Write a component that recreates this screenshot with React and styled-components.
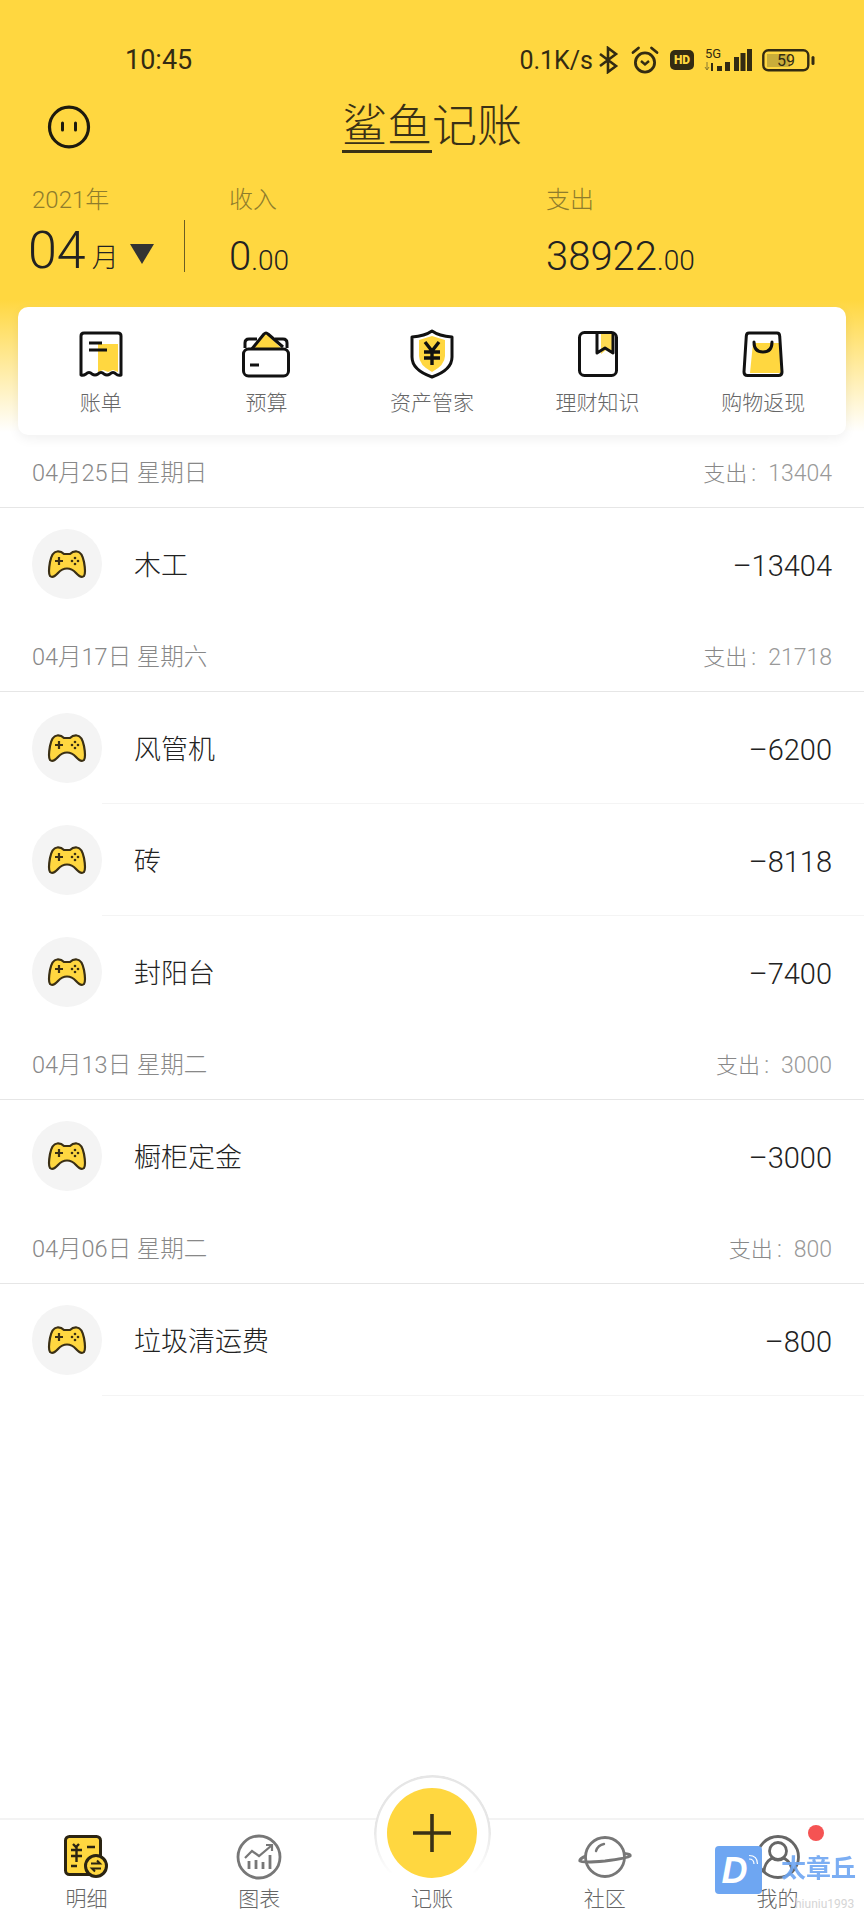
import styled, { createGlobalStyle } from 'styled-components';

const YELLOW = '#ffd740';
const INK = '#332b12';

const Global = createGlobalStyle`
    html, body {
        margin: 0;
        padding: 0;
        background: #fff;
    }
    * {
        box-sizing: border-box;
    }
`;

const groups = [
    { date: '04月25日 星期日', total: '13404', rows: [{ name: '木工', amount: '13404' }] },
    {
        date: '04月17日 星期六',
        total: '21718',
        rows: [
            { name: '风管机', amount: '6200' },
            { name: '砖', amount: '8118' },
            { name: '封阳台', amount: '7400' },
        ],
    },
    { date: '04月13日 星期二', total: '3000', rows: [{ name: '橱柜定金', amount: '3000' }] },
    { date: '04月06日 星期二', total: '800', rows: [{ name: '垃圾清运费', amount: '800' }] },
];

function Bluetooth() {
    return (
        <svg width="22" height="28" viewBox="0 0 22 28" fill="none" stroke={INK} strokeWidth="2.6">
            <path d="M2 8 L18 20 L10 26 V2 L18 8 L2 20" />
        </svg>
    );
}

function Alarm() {
    return (
        <svg width="30" height="28" viewBox="0 0 30 28" fill="none" stroke={INK} strokeWidth="2.8">
            <circle cx="15" cy="16.5" r="9.6" />
            <path d="M3 6.5 L8.5 2 M27 6.5 L21.5 2" strokeLinecap="round" />
            <path d="M11 15 L15 18.5 L19 15" strokeWidth="2.4" />
        </svg>
    );
}

function Signal() {
    return (
        <svg width="48" height="26" viewBox="0 0 48 26" fill={INK}>
            <text x="1" y="11" fontSize="13" fontFamily="Roboto, sans-serif">5G</text>
            <path d="M3 15v8M1 20l2 3 2-3" stroke="#8a7a30" strokeWidth="1" fill="none" />
            <path d="M7 16h2v8H7z" />
            <rect x="13" y="19" width="5" height="5" />
            <rect x="21" y="15" width="5" height="9" />
            <rect x="30" y="10" width="5" height="14" />
            <rect x="43" y="2" width="5" height="22" />
            <rect x="36.500" y="6" width="5" height="18" />
        </svg>
    );
}

function Battery() {
    return (
        <svg width="53" height="23" viewBox="0 0 53 23">
            <rect x="1.3" y="1.3" width="45" height="20" rx="5" fill="none" stroke={INK} strokeWidth="2.4" />
            <rect x="5" y="5" width="23" height="13" fill="#c9ad3a" />
            <rect x="49.5" y="7" width="3" height="9" rx="1.5" fill={INK} />
            <text x="24" y="17" textAnchor="middle" fontSize="16" fontFamily="Roboto, sans-serif" fill={INK}>
                59
            </text>
        </svg>
    );
}

function Face() {
    return (
        <svg width="44" height="44" viewBox="0 0 44 44" fill="none">
            <ellipse cx="22" cy="22" rx="19.5" ry="19.8" stroke="#1d1a0e" strokeWidth="3.2" />
            <path d="M15.500 18v7M28.500 18v7" stroke="#1d1a0e" strokeWidth="3" strokeLinecap="round" />
        </svg>
    );
}

function ReceiptIcon() {
    return (
        <svg width="48" height="48" viewBox="0 0 48 48" fill="none">
            <path d="M21 14 H41 V42 L36 40 L31 42 L26 40 L21 42 Z" fill={YELLOW} />
            <path
                d="M4 45 V6 Q4 3 7 3 H41 Q44 3 44 6 V45 Q41 46 39 44 Q36 41 33 44 Q30 46 27 44 Q24 41 21 44 Q18 46 15 44 Q12 41 9 44 Q6 46 4 45 Z"
                stroke="#111"
                strokeWidth="3"
                strokeLinejoin="round"
            />
            <path d="M12 13 H25 M12 20 H30" stroke="#111" strokeWidth="3" />
        </svg>
    );
}

function WalletIcon() {
    return (
        <svg width="50" height="48" viewBox="0 0 50 48" fill="none">
            <path d="M11 19 L25 3 L41 19 Z" fill={YELLOW} />
            <path d="M10 20 L23 4 Q25 2 27 4 L42 17" stroke="#111" strokeWidth="3" strokeLinejoin="round" />
            <path d="M4 18 V13 Q4 9 8 9 H16 M34 9 H42 Q46 9 46 13 V18" stroke="#111" strokeWidth="3" />
            <rect x="2.5" y="19" width="45" height="27" rx="5" fill="#fff" stroke="#111" strokeWidth="3" />
            <path d="M9 35 H18" stroke="#111" strokeWidth="3" />
        </svg>
    );
}

function ShieldIcon() {
    return (
        <svg width="46" height="50" viewBox="0 0 46 50" fill="none">
            <path d="M10 11 L23 7 L36 11 V27 Q36 36 23 43 Q10 36 10 27 Z" fill={YELLOW} />
            <path
                d="M23 2 Q30 7 43 8 V28 Q43 41 23 48 Q3 41 3 28 V8 Q16 7 23 2 Z"
                stroke="#111"
                strokeWidth="3"
                strokeLinejoin="round"
            />
            <path d="M16 13 L23 22 L30 13 M23 22 V36 M15 23 H31 M15 29 H31" stroke="#111" strokeWidth="3.4" />
        </svg>
    );
}

function BookIcon() {
    return (
        <svg width="42" height="48" viewBox="0 0 42 48" fill="none">
            <path d="M24 4 H35 V24 L29 20 L24 24 Z" fill={YELLOW} opacity="0.9" />
            <rect x="2.5" y="2.5" width="37" height="43" rx="5" stroke="#111" strokeWidth="3" />
            <path d="M20 3 V23 L28 18 L36 23 V3" stroke="#111" strokeWidth="3" strokeLinejoin="round" />
        </svg>
    );
}

function BagIcon() {
    return (
        <svg width="42" height="48" viewBox="0 0 42 48" fill="none">
            <path d="M11 13 H37 L39 43 H8 Z" fill={YELLOW} />
            <path
                d="M7 3 H35 Q37.5 3 37.7 6 L40 42 Q40 45.5 36.5 45.5 H5.5 Q2 45.5 2 42 L4.300 6 Q4.500 3 7 3 Z"
                stroke="#111"
                strokeWidth="3"
                strokeLinejoin="round"
            />
            <path d="M12 12 Q12 22 21 22 Q30 22 30 12" stroke="#111" strokeWidth="3" strokeLinecap="round" />
        </svg>
    );
}

function Gamepad() {
    return (
        <svg width="40" height="30" viewBox="0 0 40 30" fill="none">
            <path
                d="M10 2.500 Q14 2 17 5 H23 Q26 2 30 2.500 Q35 3 37 13 Q39 24 37 27 Q34 29.500 29 24 Q25 19.500 20 19.500 Q15 19.500 11 24 Q6 29.500 3 27 Q1 24 3 13 Q5 3 10 2.500 Z"
                fill={YELLOW}
                stroke="#3a2f14"
                strokeWidth="2.200"
                strokeLinejoin="round"
            />
            <path d="M8 12 H16 M12 8 V16" stroke="#3a2f14" strokeWidth="2.200" />
            <g fill="#3a2f14">
                <circle cx="28" cy="9" r="1.300" />
                <circle cx="28" cy="15" r="1.300" />
                <circle cx="25" cy="12" r="1.300" />
                <circle cx="31" cy="12" r="1.300" />
            </g>
        </svg>
    );
}

function DetailIcon() {
    return (
        <svg width="44" height="44" viewBox="0 0 44 44" fill="none">
            <rect x="1.500" y="1.500" width="35" height="38" rx="4" fill={YELLOW} stroke="#2b2412" strokeWidth="3" />
            <path d="M9 9 L12 12 L15 9 M7 15 H18 M7 21 H18 M12.500 12 V27 M23 12 H31 M7 31 H13" stroke="#2b2412" strokeWidth="2.400" />
            <circle cx="32" cy="31" r="10.500" fill={YELLOW} stroke="#2b2412" strokeWidth="3" />
            <path d="M27 28.500 H36 L33 25.500 M37 33.500 H28 L31 36.500" stroke="#2b2412" strokeWidth="2" />
        </svg>
    );
}

function ChartIcon() {
    return (
        <svg width="46" height="46" viewBox="0 0 46 46" fill="none" stroke="#777">
            <circle cx="23" cy="23" r="21" strokeWidth="2.800" />
            <path d="M9 24 L16 17 L23 22 L35 12 M30 11 H36 V17" strokeWidth="2.200" />
            <path d="M13 27 V35 M20 26 V35 M27 28 V35 M34 21 V35" strokeWidth="2.800" />
        </svg>
    );
}

function PlanetIcon() {
    return (
        <svg width="54" height="44" viewBox="0 0 54 44" fill="none" stroke="#777">
            <circle cx="27" cy="22" r="19.500" strokeWidth="2.800" />
            <path d="M8 21 Q1 24 2 26 Q4 28 27 26 Q50 23 52 21 Q53 19 46 18.500" strokeWidth="3" fill="none" />
            <path d="M18 16 Q20 10 26 9" strokeWidth="2.400" strokeLinecap="round" />
        </svg>
    );
}

function UserIcon() {
    return (
        <svg width="46" height="46" viewBox="0 0 46 46" fill="none" stroke="#666" strokeWidth="2.800">
            <circle cx="23" cy="23" r="20.500" />
            <circle cx="23" cy="17" r="8.500" />
            <path d="M17 24 Q9 29 9 38 M29 24 Q37 29 37 38" />
            <path d="M17 24 Q23 28 29 24 " />
        </svg>
    );
}

const tools = [
    { label: '账单', icon: <ReceiptIcon /> },
    { label: '预算', icon: <WalletIcon /> },
    { label: '资产管家', icon: <ShieldIcon /> },
    { label: '理财知识', icon: <BookIcon /> },
    { label: '购物返现', icon: <BagIcon /> },
];

function Group({ group, isLast }) {
    return (
        <>
            <GroupHeader>
                <span>{group.date}</span>
                <GroupTotal>
                    <TotalLabel>支出</TotalLabel>
                    <TotalColon>:</TotalColon>
                    {group.total}
                </GroupTotal>
            </GroupHeader>
            {group.rows.map((row, i) => (
                <Row key={row.name}>
                    <IconCircle>
                        <Gamepad />
                    </IconCircle>
                    <RowBody $line={isLast || i < group.rows.length - 1}>
                        <RowName>{row.name}</RowName>
                        <RowAmount>–{row.amount}</RowAmount>
                    </RowBody>
                </Row>
            ))}
        </>
    );
}

export default function App() {
    return (
        <Page>
            <Global />
            <Top>
                <StatusBar>
                    <Clock>10:45</Clock>
                    <StatusIcons>
                        <Speed>0.1K/s</Speed>
                        <Bluetooth />
                        <Alarm />
                        <HdBadge>HD</HdBadge>
                        <Signal />
                        <Battery />
                    </StatusIcons>
                </StatusBar>
                <TitleRow>
                    <Face />
                    <Title>
                        <TitleLine>鲨鱼</TitleLine>记账
                    </Title>
                </TitleRow>
                <Summary>
                    <SummaryCol>
                        <SummaryLabel>2021年</SummaryLabel>
                        <MonthRow>
                            <MonthNumber>04</MonthNumber>
                            <MonthUnit>月</MonthUnit>
                            <Caret />
                            <MonthDivider />
                        </MonthRow>
                    </SummaryCol>
                    <SummaryCol>
                        <SummaryLabel>收入</SummaryLabel>
                        <Money>
                            0<small>.00</small>
                        </Money>
                    </SummaryCol>
                    <SummaryCol>
                        <SummaryLabel>支出</SummaryLabel>
                        <Money>
                            38922<small>.00</small>
                        </Money>
                    </SummaryCol>
                </Summary>
                <ToolCard>
                    {tools.map((tool) => (
                        <Tool key={tool.label}>
                            <ToolIcon>{tool.icon}</ToolIcon>
                            <span>{tool.label}</span>
                        </Tool>
                    ))}
                </ToolCard>
            </Top>
            <List>
                {groups.map((group, i) => (
                    <Group key={group.date} group={group} isLast={i === groups.length - 1} />
                ))}
            </List>
            <Nav>
                <NavItem>
                    <NavIcon>
                        <DetailIcon />
                    </NavIcon>
                    <span>明细</span>
                </NavItem>
                <NavItem>
                    <NavIcon>
                        <ChartIcon />
                    </NavIcon>
                    <span>图表</span>
                </NavItem>
                <NavItem>
                    <NavIcon />
                    <span>记账</span>
                    <FabRing />
                    <Fab>
                        <svg width="38" height="38" viewBox="0 0 38 38" stroke="#3a3116" strokeWidth="3.600">
                            <path d="M0 19 H38 M19 0 V38" />
                        </svg>
                    </Fab>
                </NavItem>
                <NavItem>
                    <NavIcon>
                        <PlanetIcon />
                    </NavIcon>
                    <span>社区</span>
                </NavItem>
                <NavItem>
                    <NavIcon>
                        <UserIcon />
                    </NavIcon>
                    <span>我的</span>
                    <RedDot />
                </NavItem>
                <Watermark>
                    <WatermarkLogo>
                        D
                        <svg width="12" height="12" viewBox="0 0 12 12" fill="none" stroke="#fff" strokeWidth="1.200">
                            <path d="M2 5 Q7 5 7 10 M2 1.500 Q10.500 1.500 10.500 10" />
                        </svg>
                    </WatermarkLogo>
                    <WatermarkName>太章丘</WatermarkName>
                    <WatermarkUser>hiuniu1993</WatermarkUser>
                </Watermark>
            </Nav>
        </Page>
    );
}

const Page = styled.div`
    width: 864px;
    height: 1920px;
    display: flex;
    flex-direction: column;
    overflow: hidden;
    background: #fff;
    font-family: Roboto, 'Noto Sans CJK SC', sans-serif;
    color: #333;
`;

const Top = styled.div`
    height: 436px;
    background: linear-gradient(${YELLOW} 0, ${YELLOW} 300px, #fff 432px);
`;

const StatusBar = styled.div`
    height: 90px;
    padding: 30px 49px 0 125px;
    display: flex;
    justify-content: space-between;
    align-items: center;
    color: ${INK};
`;

const Clock = styled.span`
    font-size: 27px;
`;

const StatusIcons = styled.div`
    display: flex;
    align-items: center;
    gap: 10px;
`;

const Speed = styled.span`
    font-size: 25px;
    margin-right: -5px;
`;

const HdBadge = styled.span`
    width: 24px;
    height: 20px;
    border-radius: 5px;
    background: ${INK};
    color: ${YELLOW};
    font-size: 12px;
    font-weight: 900;
    line-height: 20px;
    text-align: center;
`;

const TitleRow = styled.div`
    height: 70px;
    padding: 4px 0 0 47px;
    display: grid;
    grid-template-columns: 338px auto;
    align-items: center;
`;

const Title = styled.div`
    margin-left: -43px;
    font-size: 45px;
    font-weight: 300;
    line-height: 58px;
    color: #3a3116;
    white-space: nowrap;
`;

const TitleLine = styled.span`
    display: inline-block;
    line-height: 47px;
    border-bottom: 3px solid #3a3116;
`;

const Summary = styled.div`
    padding: 22px 0 0 32px;
    display: grid;
    grid-template-columns: 197px 317px 1fr;
`;

const SummaryCol = styled.div`
    display: flex;
    flex-direction: column;
`;

const SummaryLabel = styled.span`
    height: 36px;
    font-size: 24px;
    font-weight: 300;
    line-height: 36px;
    color: #8e7c2c;
`;

const MonthRow = styled.div`
    height: 65px;
    margin-left: -4px;
    display: flex;
    align-items: center;
`;

const MonthNumber = styled.span`
    font-size: 52px;
    font-weight: 300;
    color: #222;
`;

const MonthUnit = styled.span`
    margin: 10px 0 0 6px;
    font-size: 27px;
    font-weight: 300;
    color: #222;
`;

const Caret = styled.span`
    width: 0;
    height: 0;
    margin: 6px 0 0 11px;
    border-left: 12px solid transparent;
    border-right: 12px solid transparent;
    border-top: 20px solid #333;
`;

const MonthDivider = styled.span`
    width: 1px;
    height: 52px;
    margin: 2px 0 0 30px;
    align-self: flex-start;
    background: #6b5d24;
`;

const Money = styled.span`
    height: 65px;
    padding-top: 13px;
    font-size: 40px;
    font-weight: 300;
    line-height: 52px;
    color: #222;

    small {
        font-size: 28px;
    }
`;

const ToolCard = styled.div`
    height: 128px;
    margin: 24px 18px 0;
    display: grid;
    grid-template-columns: repeat(5, 1fr);
    border-radius: 10px;
    background: #fff;
    box-shadow: 0 4px 12px rgba(0, 0, 0, 0.06);
`;

const Tool = styled.div`
    display: flex;
    flex-direction: column;
    align-items: center;
    padding-top: 22px;
    font-size: 21px;
    font-weight: 300;
    color: #666;
`;

const ToolIcon = styled.div`
    height: 50px;
    margin-bottom: 7px;
    display: flex;
    align-items: center;
`;

const List = styled.div`
    flex: 1;
`;

const GroupHeader = styled.div`
    height: 72px;
    padding: 0 32px 1px;
    display: flex;
    justify-content: space-between;
    align-items: center;
    border-bottom: 1px solid #e6e6e6;
    font-size: 23.500px;
    font-weight: 300;
    color: #888;
`;

const GroupTotal = styled.span`
    font-size: 23px;
    color: #999;
`;

const TotalLabel = styled.span`
    font-size: 22px;
    color: #888;
`;

const TotalColon = styled.span`
    margin: 0 12px 0 4px;
`;

const Row = styled.div`
    height: 112px;
    padding-left: 32px;
    display: flex;
    align-items: center;
`;

const IconCircle = styled.div`
    width: 70px;
    height: 70px;
    flex: none;
    display: flex;
    align-items: center;
    justify-content: center;
    border-radius: 50%;
    background: #f4f4f4;
`;

const RowBody = styled.div`
    flex: 1;
    height: 112px;
    padding: 0 32px;
    display: flex;
    justify-content: space-between;
    align-items: center;
    border-bottom: 1px solid ${(props) => (props.$line ? '#f4f4f4' : 'transparent')};
`;

const RowName = styled.span`
    font-size: 27px;
    font-weight: 300;
    color: #222;
`;

const RowAmount = styled.span`
    padding-top: 5px;
    font-size: 29px;
    font-weight: 300;
    color: #222;
`;

const Nav = styled.div`
    height: 102px;
    position: relative;
    display: grid;
    grid-template-columns: repeat(5, 1fr);
    border-top: 2px solid #f3f3f3;
    background: #fff;
`;

const NavItem = styled.div`
    position: relative;
    display: flex;
    flex-direction: column;
    align-items: center;
    font-size: 21px;
    font-weight: 300;
    color: #666;
`;

const NavIcon = styled.div`
    height: 46px;
    margin: 14px 0 2px;
    display: flex;
    align-items: center;
`;

const FabRing = styled.div`
    position: absolute;
    left: 28px;
    top: -45px;
    width: 117px;
    height: 117px;
    border-radius: 50%;
    background: #fff;
    box-shadow: inset 0 0 0 2.5px #e6e6e6;
    mask-image: linear-gradient(#000 45%, transparent 85%);
`;

const Fab = styled.div`
    position: absolute;
    left: 41px;
    top: -32px;
    width: 90px;
    height: 90px;
    display: flex;
    align-items: center;
    justify-content: center;
    border-radius: 50%;
    background: ${YELLOW};
`;

const RedDot = styled.span`
    position: absolute;
    left: 117px;
    top: 5px;
    width: 16px;
    height: 16px;
    border-radius: 50%;
    background: #f55353;
`;

const Watermark = styled.div`
    position: absolute;
    left: 715px;
    top: 26px;
    width: 149px;
    height: 74px;
    pointer-events: none;
`;

const WatermarkLogo = styled.span`
    position: relative;
    display: block;
    width: 47px;
    height: 48px;
    padding-right: 8px;
    border-radius: 4px;
    background: #6ea6f2;
    color: #fff;
    font-family: 'Liberation Sans', sans-serif;
    font-size: 36px;
    font-style: italic;
    font-weight: 700;
    line-height: 50px;
    text-align: center;

    svg {
        position: absolute;
        right: 3px;
        top: 8px;
    }
`;

const WatermarkName = styled.span`
    position: absolute;
    left: 66px;
    top: 6px;
    font-size: 25px;
    font-weight: 700;
    line-height: 34px;
    color: #6ea6f2;
    opacity: 0.9;
    white-space: nowrap;
`;

const WatermarkUser = styled.span`
    position: absolute;
    left: 80px;
    top: 50px;
    font-size: 12px;
    line-height: 16px;
    color: #d5d5d5;
    white-space: nowrap;
`;
